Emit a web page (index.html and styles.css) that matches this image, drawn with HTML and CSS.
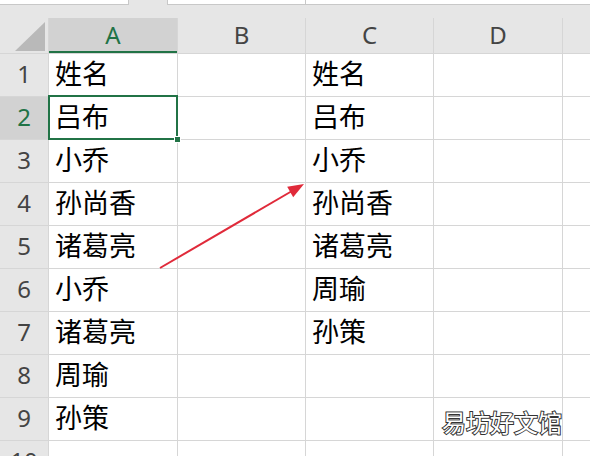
FILE: index.html
```html
<!DOCTYPE html>
<html>
<head>
<meta charset="utf-8">
<link rel="stylesheet" href="styles.css">
</head>
<body>
<div class="sheet">
  <div class="topbar">
    <div class="tab t1"></div>
    <div class="tab t2"></div>
    <div class="tab t3"></div>
  </div>
  <div class="grid">
    <div class="hd corner"><svg width="48" height="35" viewBox="0 0 48 35"><polygon points="15,33 45,4 45,33" fill="#b9b9b9"/></svg></div>
    <div class="hd col sel">A</div>
    <div class="hd col">B</div>
    <div class="hd col">C</div>
    <div class="hd col">D</div>
    <div class="hd col"></div>

    <div class="hd row">1</div><div class="c">姓名</div><div class="c"></div><div class="c">姓名</div><div class="c"></div><div class="c"></div>
    <div class="hd row sel">2</div><div class="c">吕布</div><div class="c"></div><div class="c">吕布</div><div class="c"></div><div class="c"></div>
    <div class="hd row">3</div><div class="c">小乔</div><div class="c"></div><div class="c">小乔</div><div class="c"></div><div class="c"></div>
    <div class="hd row">4</div><div class="c">孙尚香</div><div class="c"></div><div class="c">孙尚香</div><div class="c"></div><div class="c"></div>
    <div class="hd row">5</div><div class="c">诸葛亮</div><div class="c"></div><div class="c">诸葛亮</div><div class="c"></div><div class="c"></div>
    <div class="hd row">6</div><div class="c">小乔</div><div class="c"></div><div class="c">周瑜</div><div class="c"></div><div class="c"></div>
    <div class="hd row">7</div><div class="c">诸葛亮</div><div class="c"></div><div class="c">孙策</div><div class="c"></div><div class="c"></div>
    <div class="hd row">8</div><div class="c">周瑜</div><div class="c"></div><div class="c"></div><div class="c"></div><div class="c"></div>
    <div class="hd row">9</div><div class="c">孙策</div><div class="c"></div><div class="c"></div><div class="c"></div><div class="c"></div>
    <div class="hd row">10</div><div class="c"></div><div class="c"></div><div class="c"></div><div class="c"></div><div class="c"></div>
  </div>
  <div class="selection"><span class="handle"></span></div>
  <svg class="arrow" width="590" height="456" viewBox="0 0 590 456">
    <line x1="160" y1="268" x2="292" y2="191" stroke="#e02a3a" stroke-width="2"/>
    <polygon points="304,184 293.2,197.2 287.2,186.8" fill="#e02a3a"/>
  </svg>
  <div class="watermark">易坊好文馆</div>
</div>
</body>
</html>
```

FILE: styles.css
```css
html, body {
  margin: 0;
  padding: 0;
  background: #ffffff;
}
.sheet {
  position: relative;
  width: 590px;
  height: 456px;
  overflow: hidden;
  font-family: "Noto Sans", "Noto Sans CJK SC", sans-serif;
}
.topbar {
  height: 17px;
  background: #e6e6e6;
  display: flex;
  align-items: flex-start;
}
.tab {
  height: 4px;
  background: #ffffff;
  border-bottom: 1px solid #c8c8c8;
}
.t1 { width: 128px; border-right: 1px solid #c8c8c8; }
.t2 { width: 137px; margin-left: 38px; border-left: 1px solid #c8c8c8; border-right: 1px solid #c8c8c8; }
.t3 { flex: 1; }
.grid {
  display: grid;
  grid-template-columns: 48px 128px 127px 127px 128px 1fr;
  grid-template-rows: 35px repeat(10, 42px);
  gap: 1px;
  background: #d6d6d6;
  border-top: 1px solid #e6e6e6;
}
.hd {
  background: #e6e6e6;
  color: #444444;
  font-size: 24px;
  display: flex;
  align-items: center;
  justify-content: center;
  padding-bottom: 3px;
  box-sizing: border-box;
}
.corner {
  align-items: flex-end;
  padding-bottom: 0;
}
.corner svg {
  display: block;
}
.hd.col.sel {
  background: #d2d2d2;
  color: #217346;
  box-shadow: inset 0 -2px 0 #217346;
}
.hd.row.sel {
  background: #d2d2d2;
  color: #217346;
}
.c {
  background: #ffffff;
  color: #000000;
  font-family: "Noto Sans CJK SC", sans-serif;
  font-size: 27px;
  display: flex;
  align-items: center;
  padding-left: 6px;
  padding-bottom: 5px;
  white-space: nowrap;
}
.selection {
  position: absolute;
  left: 48px;
  top: 95px;
  width: 126px;
  height: 41px;
  border: 2px solid #217346;
}
.handle {
  position: absolute;
  right: -5px;
  bottom: -5px;
  width: 5px;
  height: 5px;
  background: #217346;
  border: 1px solid #ffffff;
}
.arrow {
  position: absolute;
  left: 0;
  top: 0;
}
.watermark {
  position: absolute;
  left: 442px;
  top: 404px;
  font-family: "Noto Sans CJK SC", sans-serif;
  font-size: 24px;
  color: #ffffff;
  -webkit-text-stroke: 2px #333333;
  paint-order: stroke fill;
}
```
